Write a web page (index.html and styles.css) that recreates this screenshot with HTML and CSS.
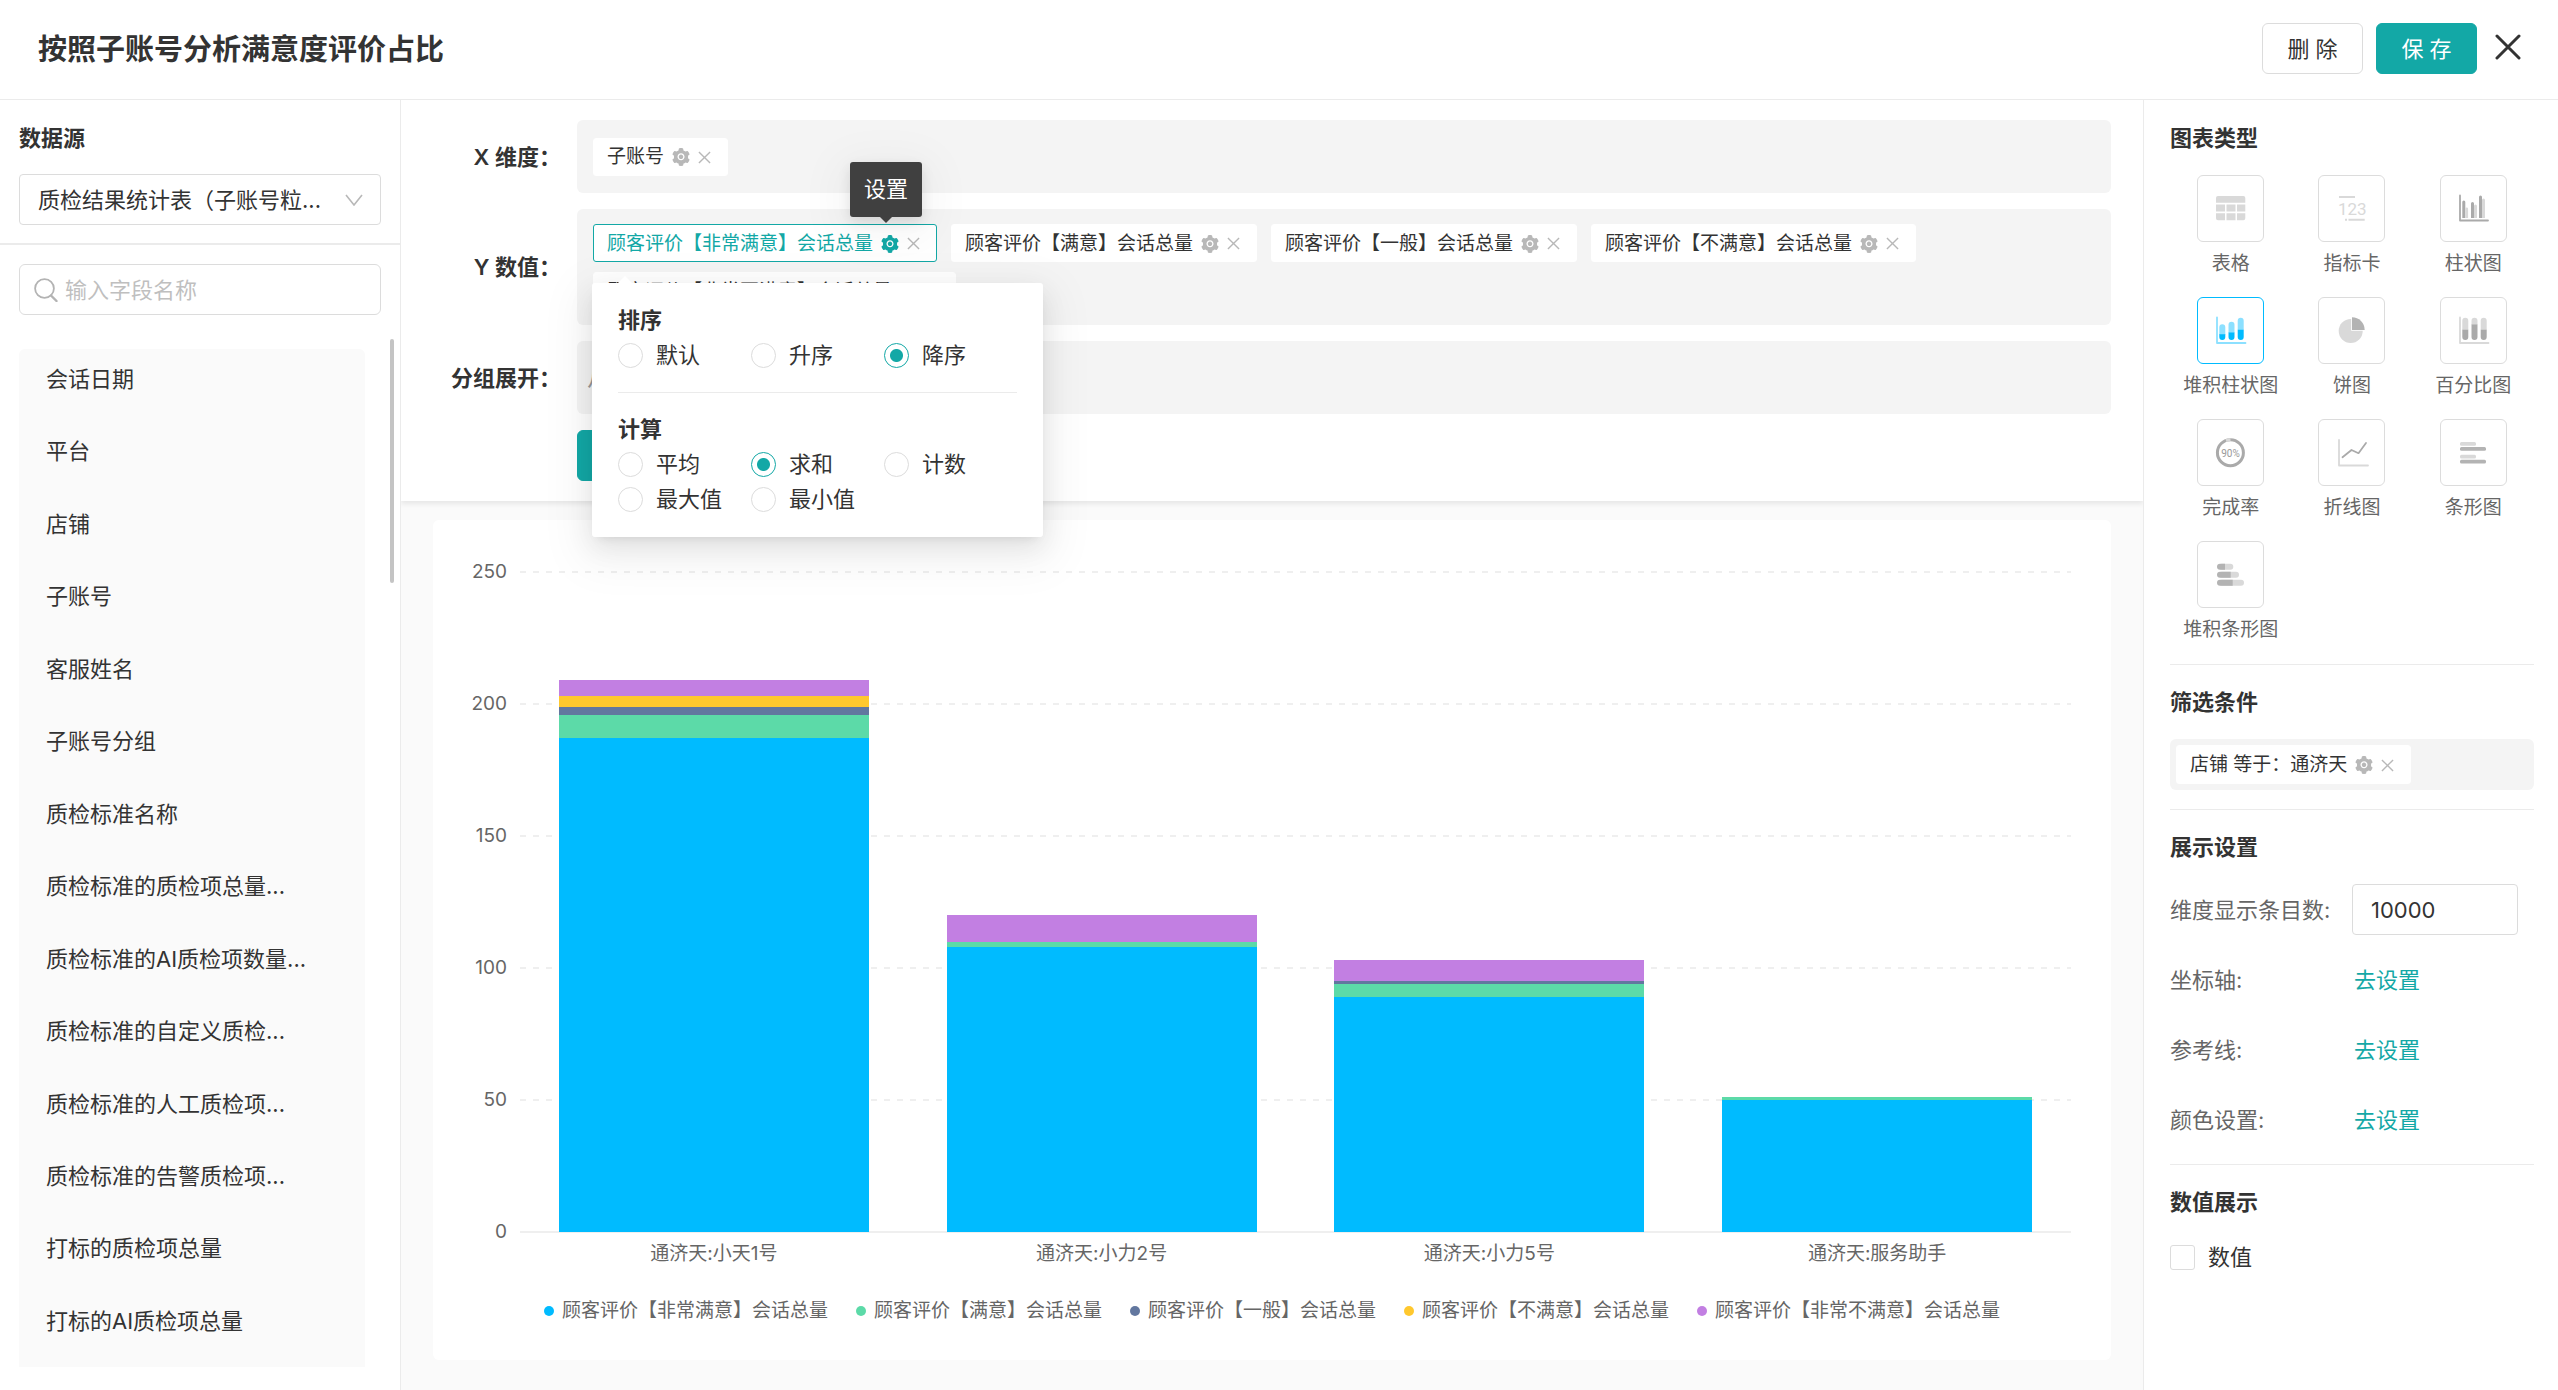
FILE: index.html
```html
<!DOCTYPE html>
<html lang="zh-CN">
<head>
<meta charset="utf-8">
<meta name="viewport" content="width=device-width, initial-scale=1">
<title>按照子账号分析满意度评价占比</title>
<link rel="stylesheet" href="styles.css">
</head>
<body>
<svg class="sprite" aria-hidden="true">
  <symbol id="gear" viewBox="64 64 896 896"><path d="M512.5 390.6c-29.9 0-57.9 11.6-79.1 32.8-21.1 21.2-32.8 49.2-32.8 79.1 0 29.9 11.7 57.9 32.8 79.1 21.2 21.1 49.2 32.8 79.1 32.8 29.9 0 57.9-11.7 79.1-32.8 21.1-21.2 32.8-49.2 32.8-79.1 0-29.9-11.7-57.9-32.8-79.1a110.96 110.96 0 00-79.1-32.8zm412.3 235.5l-65.4-55.9c3.1-19 4.7-38.4 4.7-57.7s-1.6-38.8-4.7-57.7l65.4-55.9a32.03 32.03 0 009.3-35.2l-.9-2.6a442.5 442.5 0 00-79.6-137.7l-1.8-2.1a32.12 32.12 0 00-35.1-9.5l-81.2 28.9c-30-24.6-63.4-44-99.6-57.5l-15.7-84.9a32.05 32.05 0 00-25.8-25.7l-2.7-.5c-52-9.4-106.8-9.4-158.8 0l-2.7.5a32.05 32.05 0 00-25.8 25.7l-15.8 85.3a353.44 353.44 0 00-98.9 57.3l-81.8-29.1a32 32 0 00-35.1 9.5l-1.8 2.1a445.93 445.93 0 00-79.6 137.7l-.9 2.6c-4.5 12.5-.8 26.5 9.3 35.2l66.2 56.5c-3.1 18.8-4.6 38-4.6 57 0 19.2 1.5 38.4 4.6 57l-66 56.5a32.03 32.03 0 00-9.3 35.2l.9 2.6c18.1 50.3 44.8 96.8 79.6 137.7l1.8 2.1a32.12 32.12 0 0035.1 9.5l81.8-29.1c29.8 24.5 63 43.9 98.9 57.3l15.8 85.3a32.05 32.05 0 0025.8 25.7l2.7.5a448.27 448.27 0 00158.8 0l2.7-.5a32.05 32.05 0 0025.8-25.7l15.7-84.9c36.2-13.6 69.6-32.9 99.6-57.5l81.2 28.9a32 32 0 0035.1-9.5l1.8-2.1c34.8-41.1 61.5-87.4 79.6-137.7l.9-2.6c4.3-12.4.6-26.3-9.5-35zm-412.3 52.2c-97.1 0-175.8-78.7-175.8-175.8s78.7-175.8 175.8-175.8 175.8 78.7 175.8 175.8-78.7 175.8-175.8 175.8z"/></symbol>
  <symbol id="cross" viewBox="0 0 14 14"><path d="M1 1L13 13M13 1L1 13" fill="none" stroke="currentColor" stroke-width="1.5"/></symbol>
</svg>

<header class="topbar">
  <h1>按照子账号分析满意度评价占比</h1>
  <div class="actions">
    <button type="button" class="btn">删 除</button>
    <button type="button" class="btn btn-primary">保 存</button>
    <button type="button" class="close" aria-label="关闭"><svg viewBox="0 0 26 26"><path d="M2 2L24 24M24 2L2 24" fill="none" stroke="currentColor" stroke-width="3" stroke-linecap="round"/></svg></button>
  </div>
</header>

<div class="layout">
  <aside class="sidebar">
    <div class="source">
      <h2><label for="source">数据源</label></h2>
      <div class="select-wrap">
        <select id="source" class="field"><option>质检结果统计表（子账号粒...</option></select>
        <svg class="chevron" viewBox="0 0 18 12"><path d="M1 1L9 11L17 1" fill="none" stroke="currentColor" stroke-width="1.6"/></svg>
      </div>
    </div>
    <div class="search-wrap">
      <svg class="search-icon" viewBox="0 0 24 24"><circle cx="10.5" cy="10.5" r="9.4" fill="none" stroke="currentColor" stroke-width="1.8"/><path d="M17 17.5L22.5 23" stroke="currentColor" stroke-width="2.4" stroke-linecap="round"/></svg>
      <input type="text" class="field" placeholder="输入字段名称" aria-label="输入字段名称">
    </div>
    <div class="fields">
      <ul>
        <li>会话日期</li>
        <li>平台</li>
        <li>店铺</li>
        <li>子账号</li>
        <li>客服姓名</li>
        <li>子账号分组</li>
        <li>质检标准名称</li>
        <li>质检标准的质检项总量...</li>
        <li>质检标准的AI质检项数量...</li>
        <li>质检标准的自定义质检...</li>
        <li>质检标准的人工质检项...</li>
        <li>质检标准的告警质检项...</li>
        <li>打标的质检项总量</li>
        <li>打标的AI质检项总量</li>
      </ul>
      <span class="thumb"></span>
    </div>
  </aside>

  <main class="center">
    <section class="config">
      <h3>X 维度：</h3>
      <div class="drop">
        <div class="chip">子账号<button type="button" class="gear" aria-label="设置"><svg><use href="#gear"/></svg></button><button type="button" class="del" aria-label="移除"><svg><use href="#cross"/></svg></button></div>
      </div>

      <h3>Y 数值：</h3>
      <div class="drop">
        <div class="chip active">顾客评价【非常满意】会话总量<button type="button" class="gear" aria-label="设置"><svg><use href="#gear"/></svg></button><button type="button" class="del" aria-label="移除"><svg><use href="#cross"/></svg></button>
          <div class="tooltip" role="tooltip">设置</div>
          <div class="popup">
            <fieldset>
              <legend>排序</legend>
              <div class="options">
                <label><input type="radio" name="sort">默认</label>
                <label><input type="radio" name="sort">升序</label>
                <label><input type="radio" name="sort" checked>降序</label>
              </div>
            </fieldset>
            <hr>
            <fieldset>
              <legend>计算</legend>
              <div class="options">
                <label><input type="radio" name="calc">平均</label>
                <label><input type="radio" name="calc" checked>求和</label>
                <label><input type="radio" name="calc">计数</label>
                <label><input type="radio" name="calc">最大值</label>
                <label><input type="radio" name="calc">最小值</label>
              </div>
            </fieldset>
          </div>
        </div>
        <div class="chip">顾客评价【满意】会话总量<button type="button" class="gear" aria-label="设置"><svg><use href="#gear"/></svg></button><button type="button" class="del" aria-label="移除"><svg><use href="#cross"/></svg></button></div>
        <div class="chip">顾客评价【一般】会话总量<button type="button" class="gear" aria-label="设置"><svg><use href="#gear"/></svg></button><button type="button" class="del" aria-label="移除"><svg><use href="#cross"/></svg></button></div>
        <div class="chip">顾客评价【不满意】会话总量<button type="button" class="gear" aria-label="设置"><svg><use href="#gear"/></svg></button><button type="button" class="del" aria-label="移除"><svg><use href="#cross"/></svg></button></div>
        <div class="chip">顾客评价【非常不满意】会话总量<button type="button" class="gear" aria-label="设置"><svg><use href="#gear"/></svg></button><button type="button" class="del" aria-label="移除"><svg><use href="#cross"/></svg></button></div>
      </div>

      <h3>分组展开：</h3>
      <div class="drop empty">从左侧拖入字段</div>

      <button type="button" class="btn btn-primary query" aria-label="查询"></button>
    </section>

    <section class="chart">
      <div class="yaxis"><span>250</span><span>200</span><span>150</span><span>100</span><span>50</span><span>0</span></div>
      <div class="plot">
        <div class="grid"><i></i><i></i><i></i><i></i><i></i><i></i></div>
        <div class="bar"><i class="s1" style="--v:187"></i><i class="s2" style="--v:9"></i><i class="s3" style="--v:3"></i><i class="s4" style="--v:4"></i><i class="s5" style="--v:6"></i></div>
        <div class="bar"><i class="s1" style="--v:108"></i><i class="s2" style="--v:2"></i><i class="s5" style="--v:10"></i></div>
        <div class="bar"><i class="s1" style="--v:89"></i><i class="s2" style="--v:5"></i><i class="s3" style="--v:1"></i><i class="s5" style="--v:8"></i></div>
        <div class="bar"><i class="s1" style="--v:50"></i><i class="s2" style="--v:1"></i></div>
      </div>
      <div class="xaxis"><span>通济天:小天1号</span><span>通济天:小力2号</span><span>通济天:小力5号</span><span>通济天:服务助手</span></div>
      <ul class="legend">
        <li><i class="s1"></i>顾客评价【非常满意】会话总量</li>
        <li><i class="s2"></i>顾客评价【满意】会话总量</li>
        <li><i class="s3"></i>顾客评价【一般】会话总量</li>
        <li><i class="s4"></i>顾客评价【不满意】会话总量</li>
        <li><i class="s5"></i>顾客评价【非常不满意】会话总量</li>
      </ul>
    </section>
  </main>

  <aside class="panel">
    <section>
      <h2>图表类型</h2>
      <div class="types">
        <button type="button"><svg viewBox="1 1 65 65"><g fill="#d9d9d9"><path d="M21 21h25.300a2 2 0 0 1 2 2v4.700H19V23a2 2 0 0 1 2-2z"/><path d="M19 29.500h9v7h-9zM29.500 29.500h9v7h-9zM40 29.500h8.300v7H40zM19 38.300h9v7h-7a2 2 0 0 1-2-2zM29.500 38.300h9v7h-9zM40 38.300h8.300v5a2 2 0 0 1-2 2H40z"/></g></svg>表格</button>
        <button type="button"><svg viewBox="1 1 65 65"><g fill="#d9d9d9"><path d="M21 21h16v2H21zM30.500 43.700h16.200v2H30.500zM27 43.700h2v2h-2z"/><text x="20" y="40" class="t123">123</text></g></svg>指标卡</button>
        <button type="button"><svg viewBox="1 1 65 65"><path d="M20 20.500V45.500H48" fill="none" stroke="#aaa" stroke-width="1.800" stroke-linecap="round" stroke-linejoin="round"/><g fill="#aaa"><path d="M22.300 43V27a1.500 1.500 0 0 1 3 0V43zM31 43V28.500a1.500 1.500 0 0 1 3 0V43zM39 43V22a1.500 1.500 0 0 1 3 0V43z"/></g><g fill="#d9d9d9"><path d="M25.300 43V34a1.400 1.400 0 0 1 2.800 0V43zM34 43V31a1.500 1.500 0 0 1 3 0V43zM42 43V25a1.500 1.500 0 0 1 3 0V43z"/></g></svg>柱状图</button>
        <button type="button" class="on" aria-pressed="true"><svg viewBox="1 1 65 65"><path d="M20 20.500V46H48.500" fill="none" stroke="#8ce0ff" stroke-width="1.800" stroke-linecap="round" stroke-linejoin="round"/><g fill="#8ce0ff"><path d="M22.300 38V30.300a3 3 0 0 1 6 0V38zM31.500 36V27.700a3 3 0 0 1 6 0V36zM40.700 33V23.700a3 3 0 0 1 6 0V33z"/></g><g fill="#00bbff"><path d="M22.300 37.300h6V40a3 3 0 0 1-6 0zM31.500 35.500h6V40a3 3 0 0 1-6 0zM40.700 32.700h6V40a3 3 0 0 1-6 0z"/></g></svg>堆积柱状图</button>
        <button type="button"><svg viewBox="1 1 65 65"><circle cx="32.700" cy="34" r="12" fill="#d9d9d9"/><path d="M34 33V20.300A12.700 12.700 0 0 1 46.700 33z" fill="#b3b3b3" stroke="#fff" stroke-width="1.600" paint-order="stroke"/></svg>饼图</button>
        <button type="button"><svg viewBox="1 1 65 65"><path d="M20 20.500V46H48.500" fill="none" stroke="#d9d9d9" stroke-width="1.800" stroke-linecap="round" stroke-linejoin="round"/><g fill="#d9d9d9"><path d="M22.300 33V23.700a3 3 0 0 1 6 0V33zM31.500 28V23.700a3 3 0 0 1 6 0V28zM40.700 33V23.700a3 3 0 0 1 6 0V33z"/></g><g fill="#aaa"><path d="M22.300 32.700h6V40a3 3 0 0 1-6 0zM31.500 27.500h6V40a3 3 0 0 1-6 0zM40.700 32.700h6V40a3 3 0 0 1-6 0z"/></g></svg>百分比图</button>
        <button type="button"><svg viewBox="1 1 65 65"><circle cx="33.400" cy="33.700" r="13" fill="none" stroke="#aaa" stroke-width="3"/><path d="M29 21.500A13 13 0 0 1 33.500 20.700" fill="none" stroke="#d9d9d9" stroke-width="3"/><text x="33.500" y="37.500" class="t90" fill="#999" text-anchor="middle">90%</text></svg>完成率</button>
        <button type="button"><svg viewBox="1 1 65 65"><path d="M21 20.800V46.500H50" fill="none" stroke="#d9d9d9" stroke-width="1.800" stroke-linecap="round" stroke-linejoin="round"/><path d="M24.500 38.300L33.500 31L40.500 34.200L48 24" fill="none" stroke="#aaa" stroke-width="1.800" stroke-linecap="round" stroke-linejoin="round"/></svg>折线图</button>
        <button type="button"><svg viewBox="1 1 65 65"><g fill="#d9d9d9"><rect x="20" y="23" width="16" height="3.800" rx="1.500"/><rect x="20" y="35.800" width="16" height="3.800" rx="1.500"/></g><g fill="#b3b3b3"><rect x="20" y="28" width="26" height="3.800" rx="1.500"/><rect x="20" y="40.700" width="26" height="3.800" rx="1.500"/></g></svg>条形图</button>
        <button type="button"><svg viewBox="1 1 65 65"><g fill="#d9d9d9"><rect x="22" y="22.700" width="14.300" height="6" rx="3"/><rect x="22" y="30.700" width="20" height="6" rx="3"/><rect x="22" y="38.700" width="25" height="6" rx="3"/></g><g fill="#b3b3b3"><path d="M28 22.700v6H23a3 3 0 0 1 0-6zM33.700 30.700v6H23a3 3 0 0 1 0-6zM35.700 38.700v6H23a3 3 0 0 1 0-6z"/></g></svg>堆积条形图</button>
      </div>
    </section>

    <section>
      <h2>筛选条件</h2>
      <div class="filter">
        <div class="chip">店铺 等于：通济天<button type="button" class="gear" aria-label="设置"><svg><use href="#gear"/></svg></button><button type="button" class="del" aria-label="移除"><svg><use href="#cross"/></svg></button></div>
      </div>
    </section>

    <section>
      <h2>展示设置</h2>
      <div class="settings">
        <label for="limit">维度显示条目数:</label><input id="limit" class="field" type="text" inputmode="numeric" value="10000">
        <span>坐标轴:</span><a href="#axis">去设置</a>
        <span>参考线:</span><a href="#refline">去设置</a>
        <span>颜色设置:</span><a href="#color">去设置</a>
      </div>
    </section>

    <section>
      <h2>数值展示</h2>
      <label class="check"><input type="checkbox">数值</label>
    </section>
  </aside>
</div>
</body>
</html>
```
FILE: styles.css
```css
:root {
  --teal: #13a8a6;
  --text: #333;
  --muted: #666;
  --line: #ebebeb;
  --border: #dcdcdc;
  --icon: #b8b8b8;
}

*, *::before, *::after { box-sizing: border-box; }

body {
  margin: 0;
  min-height: 100vh;
  display: flex;
  flex-direction: column;
  background: #fff;
  color: var(--text);
  font: 22px/36px Inter, "Noto Sans CJK SC", sans-serif;
}

button, input, select { font: inherit; color: inherit; margin: 0; }
button { padding: 0; border: 0; background: none; cursor: pointer; }
h1, h2, h3, ul { margin: 0; padding: 0; }
ul { list-style: none; }
h2, h3 { font-size: 22px; font-weight: 600; }
svg { display: block; fill: currentColor; }
.sprite { display: none; }

/* top bar */
.topbar {
  display: flex;
  align-items: center;
  justify-content: space-between;
  height: 100px;
  padding: 0 37px 0 38px;
  border-bottom: 1px solid var(--line);
}
.topbar h1 { font-size: 29px; font-weight: 600; }
.actions { display: flex; align-items: center; gap: 13px; padding-bottom: 2px; }
.btn {
  width: 101px;
  height: 51px;
  border: 1px solid var(--border);
  border-radius: 6px;
  background: #fff;
}
.btn-primary { border-color: var(--teal); background: var(--teal); color: #fff; }
.close { width: 26px; margin: 0 0 4px 5px; }

.layout {
  flex: 1;
  display: grid;
  grid-template-columns: 401px minmax(0, 1fr) 415px;
}

/* left column */
.sidebar {
  display: flex;
  flex-direction: column;
  border-right: 1px solid var(--line);
}
.source { padding: 20px 19px 18px; border-bottom: 2px solid var(--line); }
.source h2 { margin-bottom: 18px; }
.field {
  display: block;
  width: 100%;
  height: 51px;
  padding: 0 18px;
  border: 1px solid var(--border);
  border-radius: 4px;
  background: #fff;
  outline: 0;
}
.select-wrap, .search-wrap { position: relative; }
.select-wrap select { appearance: none; }
.chevron {
  position: absolute;
  top: 20px;
  right: 18px;
  width: 18px;
  height: 12px;
  color: var(--icon);
  pointer-events: none;
}
.search-wrap { margin: 19px 19px 24px; }
.search-wrap .field { padding-left: 45px; border-radius: 6px; }
.search-wrap ::placeholder { color: #bfbfbf; opacity: 1; }
.search-icon {
  position: absolute;
  top: 14px;
  left: 15px;
  width: 24px;
  height: 24px;
  color: #b3b3b3;
}
.fields {
  flex: 1;
  display: flex;
  gap: 25px;
  padding: 0 6px 23px 19px;
}
.fields ul {
  flex: 1;
  display: flex;
  flex-direction: column;
  justify-content: space-between;
  margin-top: 10px;
  padding: 1px 27px 17px;
  border-radius: 6px 6px 0 0;
  background: #fafafa;
}
.fields li { line-height: 58px; white-space: nowrap; }
.thumb { width: 4px; height: 244px; border-radius: 2px; background: #c4c4c4; }

/* centre column */
.center { display: flex; flex-direction: column; background: #fafafa; }
.config {
  position: relative;
  z-index: 1;
  display: grid;
  grid-template-columns: 160px minmax(0, 1fr);
  gap: 16px;
  align-items: center;
  padding: 20px 32px 20px 0;
  background: #fff;
  box-shadow: 0 3px 5px rgba(0, 0, 0, .08);
  clip-path: inset(0 0 -100px);
}
.config h3 { text-align: right; }
.drop {
  display: flex;
  flex-wrap: wrap;
  align-items: center;
  align-content: center;
  gap: 10px 14px;
  min-height: 73px;
  padding: 15px 16px;
  border-radius: 6px;
  background: #f4f4f4;
}
.drop.empty { padding-left: 10px; color: #999; }
.query { grid-column: 2; width: 120px; }

.chip {
  position: relative;
  display: flex;
  align-items: center;
  height: 38px;
  padding: 1px 16px 0 13px;
  border: 1px solid #fff;
  border-radius: 3px;
  background: #fff;
  font-size: 19px;
  white-space: nowrap;
}
.chip .gear { margin: 0 8px; color: var(--icon); }
.gear svg { width: 18px; height: 18px; }
.chip .del { color: var(--icon); }
.del svg { width: 13px; height: 13px; }
.chip.active { border-color: var(--teal); color: var(--teal); }
.chip.active .gear { color: var(--teal); }

.tooltip {
  position: absolute;
  right: 14px;
  bottom: 44px;
  padding: 0 14px;
  border-radius: 3px;
  background: #404040;
  box-shadow: 0 9px 45px 13px rgba(0, 0, 0, .04), 0 5px 13px rgba(0, 0, 0, .1);
  color: #fff;
  font-size: 22px;
  line-height: 55px;
}
.tooltip::after {
  content: "";
  position: absolute;
  top: 100%;
  left: calc(50% - 6px);
  border: 6px solid transparent;
  border-top-color: #404040;
  border-bottom: 0;
}
.popup {
  position: absolute;
  z-index: 2;
  top: 58px;
  left: -2px;
  width: 451px;
  padding: 20px 26px;
  border-radius: 3px;
  background: #fff;
  box-shadow: 0 5px 10px -6px rgba(0, 0, 0, .12), 0 10px 26px rgba(0, 0, 0, .08), 0 14px 45px 13px rgba(0, 0, 0, .05);
  color: var(--text);
  font-size: 22px;
  line-height: 35px;
}
.popup::before {
  content: "";
  position: absolute;
  bottom: 100%;
  left: 26px;
  border: 7px solid transparent;
  border-bottom-color: #fff;
  border-top: 0;
}
.popup fieldset { margin: 0; padding: 0; border: 0; }
.popup legend { padding: 0; font-weight: 600; }
.popup hr { height: 1px; margin: 19px 0; border: 0; background: var(--line); }
.options { display: grid; grid-template-columns: repeat(3, 133px); }
.options label, .check { display: flex; align-items: center; gap: 13px; }

input[type="radio"], input[type="checkbox"] {
  appearance: none;
  flex: none;
  width: 25px;
  height: 25px;
  border: 1px solid var(--border);
  background: #fff;
}
input[type="radio"] { border-radius: 50%; }
input[type="checkbox"] { border-radius: 3px; }
input[type="radio"]:checked {
  border-color: var(--teal);
  background: radial-gradient(circle, var(--teal) 6px, #fff 7px);
}

/* chart */
.chart {
  flex: 1;
  display: grid;
  grid-template-columns: 74px minmax(0, 1fr);
  grid-template-rows: minmax(300px, 1fr) auto auto;
  column-gap: 13px;
  margin: 19px 32px 30px;
  padding: 52px 40px 37px 0;
  border-radius: 6px;
  background: #fff;
  color: var(--muted);
  font-size: 19px;
  line-height: 24px;
}
.yaxis {
  display: flex;
  flex-direction: column;
  justify-content: space-between;
  margin: -12px 0;
  text-align: right;
}
.plot { position: relative; display: flex; justify-content: space-around; }
.grid {
  position: absolute;
  inset: -1px 0;
  display: flex;
  flex-direction: column;
  justify-content: space-between;
}
.grid i { height: 2px; background: repeating-linear-gradient(to right, #efefef 0 6px, transparent 6px 13px); }
.grid i:last-child { background: #efefef; }
.bar { position: relative; display: flex; flex-direction: column-reverse; width: 20%; }
.bar i { height: calc(var(--v) / 250 * 100%); }
.s1 { background: #00bbff; }
.s2 { background: #5cdaa8; }
.s3 { background: #62779f; }
.s4 { background: #ffc82e; }
.s5 { background: #c27fe2; }
.xaxis { grid-column: 2; display: flex; margin-top: 10px; text-align: center; }
.xaxis span { flex: 1; }
.legend {
  grid-column: 1 / -1;
  display: flex;
  justify-content: center;
  gap: 28px;
  margin-top: 33px;
  padding-left: 40px;
  white-space: nowrap;
}
.legend li { display: flex; align-items: center; gap: 8px; }
.legend i { width: 10px; height: 10px; border-radius: 50%; }

/* right column */
.panel { padding: 20px 24px 20px 26px; border-left: 1px solid var(--line); }
.panel h2 { margin-bottom: 19px; }
.panel section + section { margin-top: 19px; padding-top: 19px; border-top: 1px solid var(--line); }
.types {
  display: grid;
  grid-template-columns: repeat(3, 1fr);
  row-gap: 18px;
  color: var(--muted);
}
.types button {
  display: flex;
  flex-direction: column;
  align-items: center;
  gap: 7px;
  font-size: 19px;
  line-height: 30px;
  white-space: nowrap;
}
.types svg { width: 67px; height: 67px; border: 1px solid var(--border); border-radius: 6px; }
.types .on svg { border-color: #00bbff; }
.t123 { font: 17px Roboto, sans-serif; }
.t90 { font: 10px Roboto, sans-serif; }
.filter { display: flex; padding: 6px; border-radius: 6px; background: #f4f4f4; }
.filter .chip { height: 39px; }
.settings {
  display: grid;
  grid-template-columns: 182px 166px;
  grid-auto-rows: 51px;
  row-gap: 19px;
  align-items: center;
  color: var(--muted);
}
.settings .field { color: var(--text); }
.settings a { padding-left: 2px; color: var(--teal); text-decoration: none; }
```
